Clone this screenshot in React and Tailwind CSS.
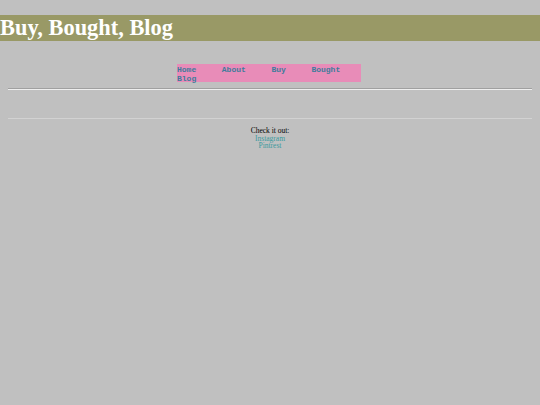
import React from 'react';

const navItems = ['Home', 'About', 'Buy', 'Bought', 'Blog'];

export default function App() {
  return (
    <div className="min-h-[405px] bg-[#c0c0c0] pt-[15px] font-['Liberation_Serif',serif]">
      <h1 className="bg-[#999966] text-white font-bold text-[22.4px] leading-[26px] h-[26px]">
        Buy, Bought, Blog
      </h1>

      <nav className="mt-[23px] ml-[177px] w-[184px] h-[18px] bg-[#e88cb8]">
        <ul className="flex flex-wrap gap-x-[25.6px] font-['Liberation_Mono',monospace] font-bold text-[8px] leading-[9px] pt-[0.5px] text-[#3e7c9c]">
          {navItems.map((item) => (
            <li key={item}>
              <a href="#">{item}</a>
            </li>
          ))}
        </ul>
      </nav>

      <div className="mx-2 mt-[6px] border-t border-t-[#a0a0a0] border-b border-b-[#eeeeee]"></div>

      <div className="mx-2 mt-[28px] border-t border-t-[#d2d2d2]"></div>

      <footer className="mt-[8px] text-center text-[7.5px] leading-[7.7px]">
        <p className="text-black">Check it out:</p>
        <p><a href="#" className="text-[#3a9a9e]">Instagram</a></p>
        <p><a href="#" className="text-[#3a9a9e]">Pintrest</a></p>
      </footer>
    </div>
  );
}
